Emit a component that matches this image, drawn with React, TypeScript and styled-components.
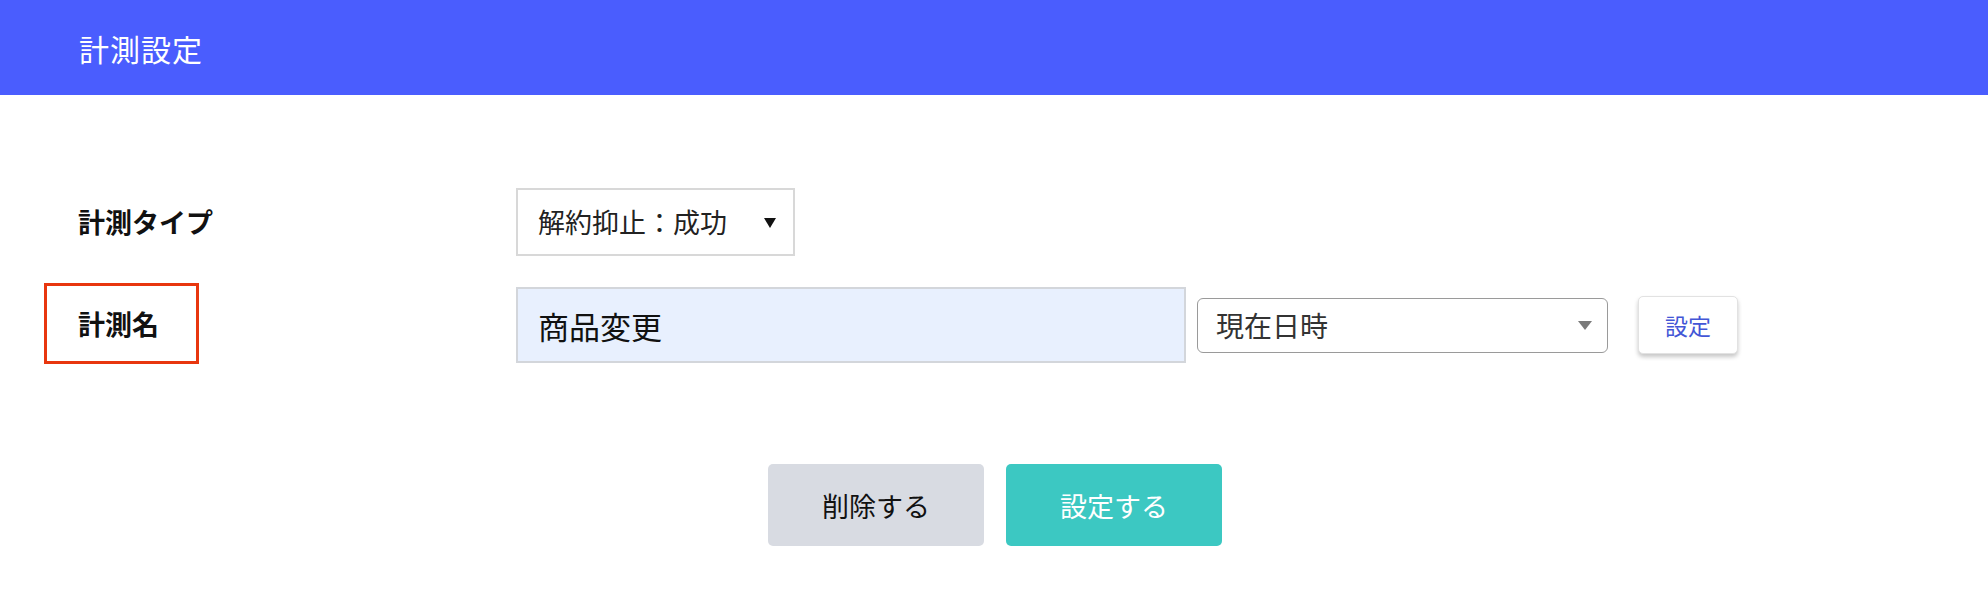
import React from 'react';
import styled, { createGlobalStyle } from 'styled-components';

const GlobalStyle = createGlobalStyle`
  * {
    box-sizing: border-box;
  }
  body {
    margin: 0;
    background: #ffffff;
    font-family: "Noto Sans CJK JP", "Noto Sans", sans-serif;
    color: #111;
  }
`;

const Header = styled.header`
  height: 95px;
  background: #4a5dfe;
  display: flex;
  align-items: center;
  padding-left: 79px;
`;

const Title = styled.h1`
  margin: 0;
  font-size: 30px;
  font-weight: 400;
  color: #ffffff;
  letter-spacing: 1px;
`;

const Main = styled.main`
  padding: 86px 0 0 44px;
  display: flex;
  flex-direction: column;
  gap: 21px;
`;

const Row = styled.div`
  display: flex;
  align-items: center;
`;

const LabelCell = styled.div`
  width: 472px;
  flex-shrink: 0;
`;

const Label = styled.div<{ $highlight?: boolean }>`
  width: 155px;
  height: 81px;
  padding-left: 31px;
  display: flex;
  align-items: center;
  white-space: nowrap;
  font-size: 27px;
  font-weight: 700;
  color: #111;
  border: 3.5px solid ${(p) => (p.$highlight ? '#e8360e' : 'transparent')};
`;

const TypeSelect = styled.div`
  width: 279px;
  height: 68px;
  border: 2px solid #d8d8d8;
  background: #fff;
  display: flex;
  align-items: center;
  justify-content: space-between;
  padding: 0 17px 0 20px;
  font-size: 27px;
  color: #222;
`;

const BlackArrow = styled.span`
  width: 0;
  height: 0;
  border-left: 6px solid transparent;
  border-right: 6px solid transparent;
  border-top: 10px solid #111;
  margin-top: 2px;
`;

const Controls = styled.div`
  display: flex;
  align-items: center;
  margin-top: 3px;
`;

const NameInput = styled.input`
  width: 670px;
  height: 76px;
  border: 2px solid #d3d6db;
  background: #e8f0fe;
  padding: 0 20px;
  font-family: inherit;
  font-size: 31px;
  color: #111;
  outline: none;
`;

const DateSelect = styled.div`
  margin-left: 11px;
  width: 411px;
  height: 55px;
  border: 1.5px solid #9a9a9a;
  border-radius: 6px;
  display: flex;
  align-items: center;
  justify-content: space-between;
  padding: 0 15px 0 18px;
  font-size: 28px;
  color: #333;
`;

const GrayArrow = styled.span`
  width: 0;
  height: 0;
  border-left: 7px solid transparent;
  border-right: 7px solid transparent;
  border-top: 9px solid #7a7a7a;
`;

const SmallButton = styled.button`
  margin-left: 30px;
  width: 100px;
  height: 58px;
  border: 1px solid #e2e2e2;
  border-radius: 5px;
  background: #fff;
  box-shadow: 0 3px 4px rgba(0, 0, 0, 0.22);
  font-family: inherit;
  font-size: 23px;
  color: #4356d6;
  cursor: pointer;
`;

const Actions = styled.div`
  display: flex;
  justify-content: center;
  gap: 22px;
  margin-top: 100px;
  margin-left: 2px;
`;

const ActionButton = styled.button<{ $primary?: boolean }>`
  width: 216px;
  height: 82px;
  border: none;
  border-radius: 5px;
  background: ${(p) => (p.$primary ? '#3cc8c2' : '#d8dbe2')};
  color: ${(p) => (p.$primary ? '#ffffff' : '#111')};
  font-family: inherit;
  font-size: 27px;
  cursor: pointer;
`;

const App: React.FC = () => (
  <>
    <GlobalStyle />
    <Header>
      <Title>計測設定</Title>
    </Header>
    <Main>
      <Row>
        <LabelCell>
          <Label>計測タイプ</Label>
        </LabelCell>
        <TypeSelect>
          <span>解約抑止：成功</span>
          <BlackArrow />
        </TypeSelect>
      </Row>
      <Row>
        <LabelCell>
          <Label $highlight>計測名</Label>
        </LabelCell>
        <Controls>
          <NameInput defaultValue="商品変更" />
          <DateSelect>
            <span>現在日時</span>
            <GrayArrow />
          </DateSelect>
          <SmallButton>設定</SmallButton>
        </Controls>
      </Row>
    </Main>
    <Actions>
      <ActionButton>削除する</ActionButton>
      <ActionButton $primary>設定する</ActionButton>
    </Actions>
  </>
);

export default App;
